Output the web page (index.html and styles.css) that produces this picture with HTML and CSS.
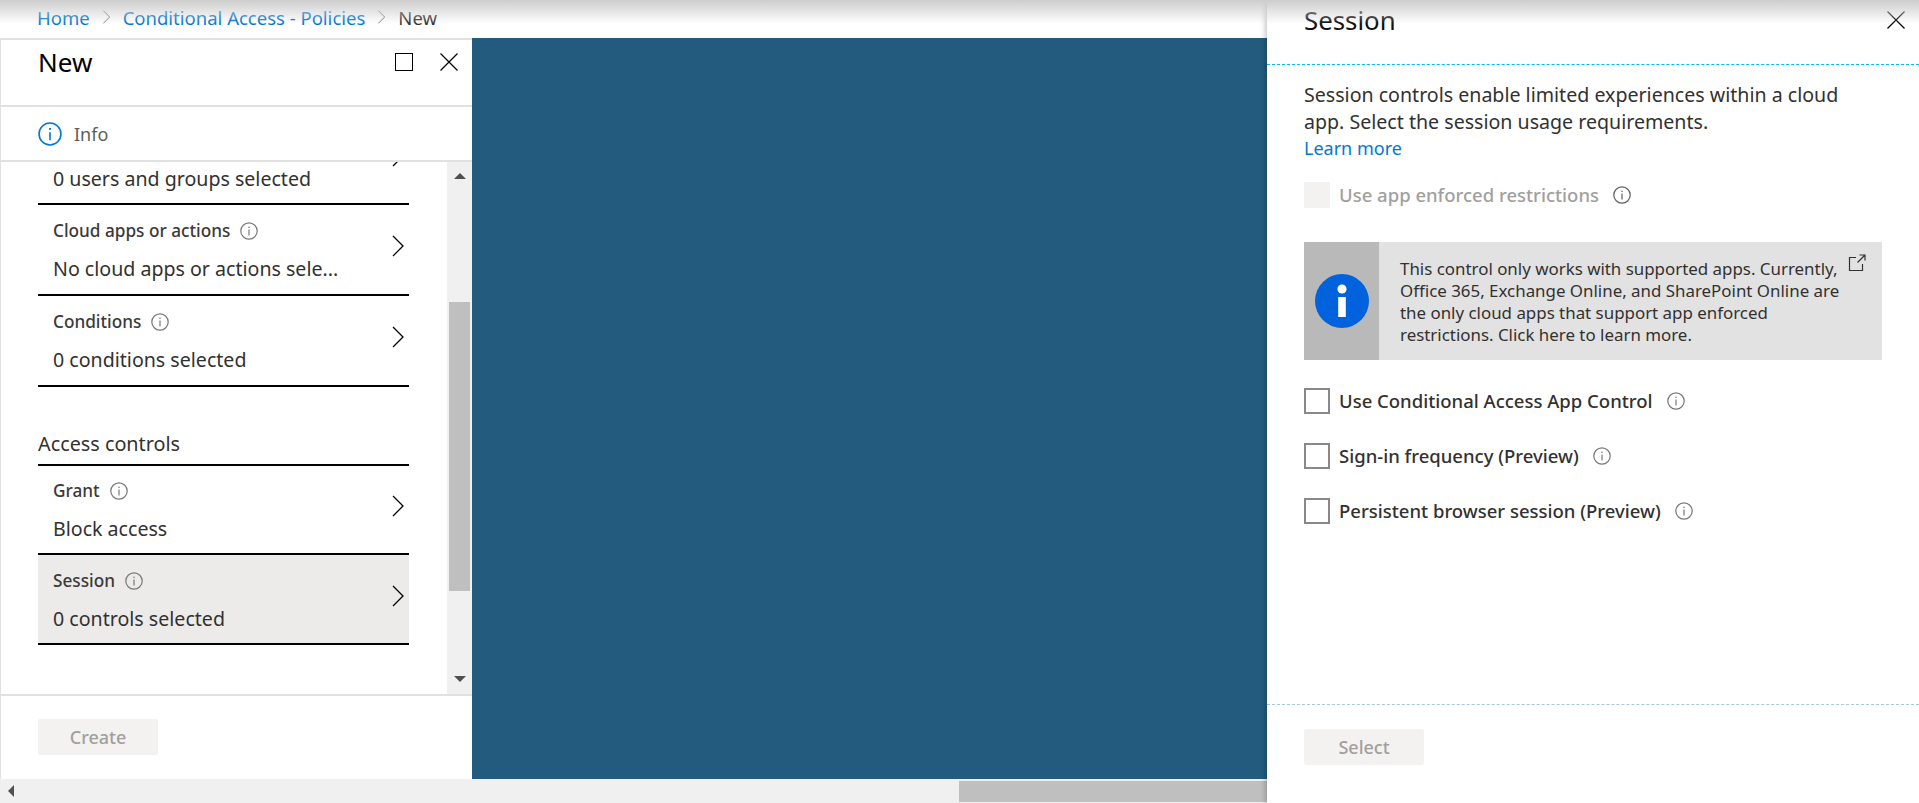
FILE: index.html
```html
<!DOCTYPE html>
<html lang="en">

<head>
    <meta charset="UTF-8">
    <title>New - Conditional Access</title>
    <link rel="stylesheet" href="styles.css">
</head>

<body>
    <svg class="sprites" width="0" height="0">
        <symbol id="chevron" viewBox="0 0 12 22">
            <path d="M1 1l10 10L1 21" fill="none" stroke="currentColor" stroke-width="1.3" />
        </symbol>
        <symbol id="close" viewBox="0 0 18 18">
            <path d="M.5.5l17 17M17.5.5l-17 17" fill="none" stroke="currentColor" stroke-width="1.2" />
        </symbol>
        <symbol id="hint" viewBox="0 0 18 18">
            <circle cx="9" cy="9" r="8.2" fill="none" stroke="currentColor" stroke-width="1.2" />
            <path d="M9 7.6v6" stroke="currentColor" stroke-width="1.2" />
            <circle cx="9" cy="5.2" r=".8" fill="currentColor" />
        </symbol>
    </svg>

    <div class="portal">
        <div class="workspace">
            <nav class="breadcrumb">
                <a href="#">Home</a>
                <svg class="crumb-sep"><use href="#chevron" /></svg>
                <a href="#">Conditional Access - Policies</a>
                <svg class="crumb-sep"><use href="#chevron" /></svg>
                <span>New</span>
            </nav>

            <div class="blades">
                <section class="blade">
                    <header class="blade-head">
                        <h1>New</h1>
                        <span class="maximize"></span>
                        <svg class="close-icon"><use href="#close" /></svg>
                    </header>

                    <div class="info-row">
                        <svg class="info-icon"><use href="#hint" /></svg>
                        <span>Info</span>
                    </div>

                    <div class="scroll-area">
                        <div class="list">
                            <div class="row row-clipped">
                                <div class="row-value">0 users and groups selected</div>
                                <svg class="chevron"><use href="#chevron" /></svg>
                            </div>
                            <div class="row">
                                <div>
                                    <div class="row-label">Cloud apps or actions <svg class="hint"><use href="#hint" /></svg></div>
                                    <div class="row-value">No cloud apps or actions sele...</div>
                                </div>
                                <svg class="chevron"><use href="#chevron" /></svg>
                            </div>
                            <div class="row">
                                <div>
                                    <div class="row-label">Conditions <svg class="hint"><use href="#hint" /></svg></div>
                                    <div class="row-value">0 conditions selected</div>
                                </div>
                                <svg class="chevron"><use href="#chevron" /></svg>
                            </div>

                            <h2 class="list-heading">Access controls</h2>

                            <div class="row row-grant">
                                <div>
                                    <div class="row-label">Grant <svg class="hint"><use href="#hint" /></svg></div>
                                    <div class="row-value">Block access</div>
                                </div>
                                <svg class="chevron"><use href="#chevron" /></svg>
                            </div>
                            <div class="row row-active">
                                <div>
                                    <div class="row-label">Session <svg class="hint"><use href="#hint" /></svg></div>
                                    <div class="row-value">0 controls selected</div>
                                </div>
                                <svg class="chevron"><use href="#chevron" /></svg>
                            </div>
                        </div>

                        <div class="v-scrollbar">
                            <span class="arrow-up"></span>
                            <span class="v-thumb"></span>
                            <span class="arrow-down"></span>
                        </div>
                    </div>

                    <footer class="blade-foot">
                        <button class="btn" disabled>Create</button>
                    </footer>
                </section>

                <div class="backdrop"></div>
            </div>

            <div class="h-scrollbar">
                <span class="arrow-left"></span>
                <span class="h-thumb"></span>
            </div>
        </div>

        <aside class="session">
            <header class="session-head">
                <h1>Session</h1>
                <svg class="close-icon"><use href="#close" /></svg>
            </header>

            <div class="session-body">
                <p class="intro">Session controls enable limited experiences within a cloud<br>app. Select the session usage requirements.<br><a href="#">Learn more</a></p>

                <label class="check check-disabled">
                    <span class="box"></span>
                    <span>Use app enforced restrictions</span>
                    <svg class="hint"><use href="#hint" /></svg>
                </label>

                <div class="notice">
                    <div class="notice-side">
                        <svg class="notice-icon" viewBox="0 0 54 54">
                            <circle cx="27" cy="27" r="27" fill="#0062dc" />
                            <circle cx="27" cy="15" r="4.6" fill="#fff" />
                            <rect x="23.2" y="23" width="7.6" height="20" fill="#fff" />
                        </svg>
                    </div>
                    <div class="notice-text">This control only works with supported apps. Currently,<br>Office 365, Exchange Online, and SharePoint Online are<br>the only cloud apps that support app enforced<br>restrictions. Click here to learn more.</div>
                    <svg class="external" viewBox="0 0 18 18">
                        <path d="M8 3.500H1.500v13h13V10M9.500 8.500L17 1M11.500 1H17v5.500" fill="none" stroke="#323130" stroke-width="1.2" />
                    </svg>
                </div>

                <label class="check">
                    <span class="box"></span>
                    <span>Use Conditional Access App Control</span>
                    <svg class="hint"><use href="#hint" /></svg>
                </label>
                <label class="check">
                    <span class="box"></span>
                    <span>Sign-in frequency (Preview)</span>
                    <svg class="hint"><use href="#hint" /></svg>
                </label>
                <label class="check">
                    <span class="box"></span>
                    <span>Persistent browser session (Preview)</span>
                    <svg class="hint"><use href="#hint" /></svg>
                </label>
            </div>

            <footer class="session-foot">
                <button class="btn" disabled>Select</button>
            </footer>
        </aside>
    </div>
</body>

</html>
```

FILE: styles.css
```css
* {
    box-sizing: border-box;
}

html,
body {
    margin: 0;
    height: 100%;
    overflow: hidden;
}

body {
    font-family: "Noto Sans", "Open Sans", sans-serif;
    font-size: 18px;
    color: #323130;
    background-color: #fff;
}

a {
    color: #0078d4;
    text-decoration: none;
}

h1,
h2,
p {
    margin: 0;
    font-weight: 400;
}

.sprites {
    position: absolute;
}

.portal {
    display: flex;
    height: 803px;
    position: relative;
}

/* grey fade along the top of the window */
.portal::after {
    content: "";
    position: absolute;
    left: 0;
    right: 0;
    top: 0;
    height: 24px;
    background: linear-gradient(#cdcdcd, rgba(255, 255, 255, 0));
    pointer-events: none;
}

.workspace {
    width: 1267px;
    display: flex;
    flex-direction: column;
}

.breadcrumb {
    height: 38px;
    padding: 0 0 4px 37px;
    display: flex;
    align-items: center;
    gap: 12px;
    font-size: 18.5px;
}

.crumb-sep {
    width: 9px;
    height: 14px;
    color: #605e5c;
}

.blades {
    flex: 1;
    display: flex;
    min-height: 0;
}

.blade {
    width: 472px;
    display: flex;
    flex-direction: column;
    border-left: 1px solid #e1e1e1;
    border-top: 2px solid #e1e1e1;
}

.blade-head {
    height: 67px;
    padding: 9px 14px 0 37px;
    display: flex;
    align-items: flex-start;
    border-bottom: 2px solid #e1e1e1;
}

.blade-head h1 {
    flex: 1;
    font-size: 26px;
    line-height: 26px;
    color: #000;
}

.maximize {
    width: 18px;
    height: 18px;
    margin-top: 4px;
    border: 1.3px solid #000;
}

.close-icon {
    width: 18px;
    height: 18px;
    color: #000;
}

.blade-head .close-icon {
    margin: 4px 0 0 27px;
}

.info-row {
    height: 55px;
    padding: 1px 0 0 37px;
    display: flex;
    align-items: center;
    gap: 12px;
    color: #605e5c;
    border-bottom: 2px solid #e1e1e1;
}

.info-icon {
    width: 24px;
    height: 24px;
    color: #0078d4;
}

.scroll-area {
    flex: 1;
    display: flex;
    min-height: 0;
}

.list {
    flex: 1;
    padding: 0 38px 0 37px;
    overflow: hidden;
}

.row {
    height: 91px;
    padding: 2px 5px 0 15px;
    display: flex;
    align-items: center;
    justify-content: space-between;
    border-bottom: 2px solid #000;
    white-space: nowrap;
}

.row-clipped {
    height: 43px;
    padding-top: 0;
    align-items: flex-end;
    overflow: hidden;
}

.row-clipped .row-value {
    margin: 0 0 12px;
}

.row-clipped .chevron {
    align-self: flex-start;
    margin: -17px 0 0;
}

.row-grant {
    height: 89px;
}

.row-active {
    height: 90px;
    padding-top: 4px;
    background-color: #edebe9;
}

.row-grant .chevron,
.row-active .chevron {
    margin-bottom: 10px;
}

.row-label {
    display: flex;
    align-items: center;
    gap: 10px;
    font-size: 17.2px;
    font-weight: 500;
    line-height: 20px;
    color: #3b3a39;
}

.row-value {
    margin-top: 16px;
    font-size: 19.6px;
    line-height: 24px;
}

.chevron {
    width: 12px;
    height: 22px;
    margin-bottom: 9px;
    color: #000;
}

.hint {
    width: 18px;
    height: 18px;
    color: #7a7876;
    flex: none;
}

.list-heading {
    height: 79px;
    padding-top: 43px;
    font-size: 19.8px;
    line-height: 28px;
    border-bottom: 2px solid #000;
}

.v-scrollbar {
    width: 25px;
    display: flex;
    flex-direction: column;
    align-items: center;
    background-color: #f0f0f0;
}

.arrow-up {
    margin-top: 11px;
    border: 6px solid transparent;
    border-top: 0;
    border-bottom: 6px solid #505050;
}

.v-thumb {
    width: 21px;
    height: 289px;
    margin-top: 123px;
    background-color: #bfbfbf;
}

.arrow-down {
    margin-top: 85px;
    border: 6px solid transparent;
    border-bottom: 0;
    border-top: 6px solid #505050;
}

.blade-foot {
    height: 85px;
    padding: 23px 0 0 37px;
    border-top: 2px solid #e1e1e1;
}

.btn {
    width: 120px;
    height: 36px;
    font-family: inherit;
    font-size: 18px;
    font-weight: 500;
    color: #a19f9d;
    background-color: #f3f2f1;
    border: 0;
    border-radius: 2px;
}

.backdrop {
    flex: 1;
    background-color: #225b7e;
}

.h-scrollbar {
    height: 24px;
    display: flex;
    align-items: center;
    justify-content: space-between;
    background-color: #f0f0f0;
}

.arrow-left {
    margin-left: 8px;
    border: 6px solid transparent;
    border-left: 0;
    border-right: 6px solid #505050;
}

.h-thumb {
    width: 308px;
    height: 21px;
    background-color: #bfbfbf;
}

.session {
    flex: 1;
    display: flex;
    flex-direction: column;
    background-color: #fff;
    box-shadow: -2px 0 5px rgba(0, 0, 0, .22);
    position: relative;
}

.session-head {
    height: 65px;
    padding: 4px 14px 0 37px;
    display: flex;
    align-items: flex-start;
    border-bottom: 1px dashed #00bcf2;
}

.session-head h1 {
    flex: 1;
    font-size: 25.8px;
    line-height: 32px;
    color: #111;
}

.session-head .close-icon {
    margin-top: 7px;
}

.session-body {
    flex: 1;
    padding: 17px 37px 0;
}

.intro {
    font-size: 19.6px;
    line-height: 26.5px;
}

.intro a {
    font-size: 18px;
}

.check {
    margin-top: 29px;
    display: flex;
    align-items: center;
    font-weight: 500;
    font-size: 18.5px;
}

.check .hint {
    margin-left: 14px;
}

.box {
    width: 26px;
    height: 26px;
    margin-right: 9px;
    border: 2px solid #8a8886;
}

.check-disabled {
    margin-top: 20px;
    color: #a19f9d;
}

.check-disabled .box {
    border: 0;
    background-color: #f3f2f1;
}

.check-disabled .hint {
    color: #605e5c;
}

.notice {
    width: 578px;
    height: 118px;
    margin-top: 34px;
    display: flex;
    align-items: center;
    background-color: #e2e2e2;
    font-size: 16.9px;
    line-height: 22px;
    position: relative;
}

.notice + .check {
    margin-top: 28px;
}

.notice-side {
    width: 75px;
    height: 100%;
    display: flex;
    align-items: center;
    justify-content: center;
    background-color: #b9b9b9;
}

.notice-icon {
    width: 54px;
    height: 54px;
}

.notice-text {
    margin: 2px 0 0 21px;
    white-space: nowrap;
}

.external {
    position: absolute;
    top: 12px;
    right: 16px;
    width: 18px;
    height: 18px;
}

.session-foot {
    height: 99px;
    padding: 24px 0 0 37px;
    border-top: 1px dashed #a9c6d6;
}
```
